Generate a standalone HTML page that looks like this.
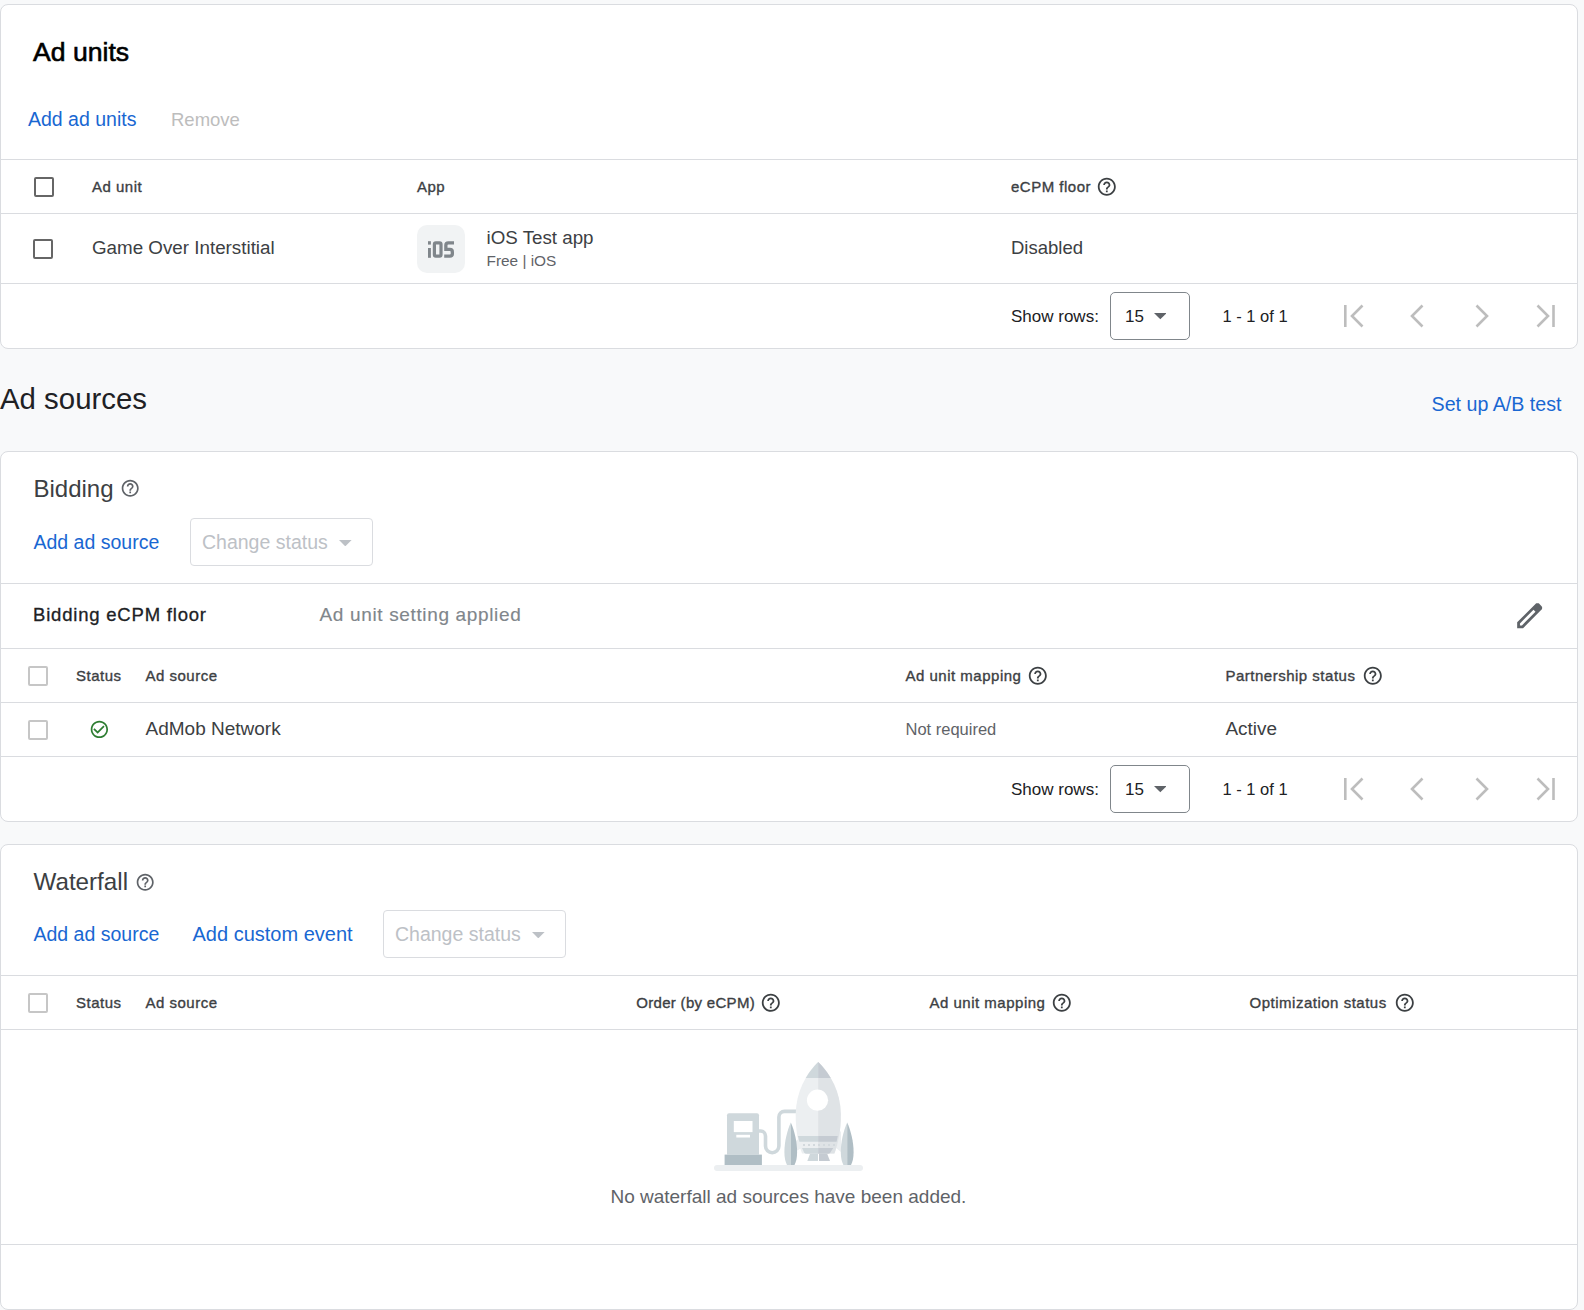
<!DOCTYPE html>
<html><head><meta charset="utf-8"><style>
html,body{margin:0;padding:0;}
body{width:1584px;height:1310px;overflow:hidden;background:#f8f9fa;position:relative;font-family:"Liberation Sans",sans-serif;}
.t{position:absolute;white-space:nowrap;}
</style></head><body>
<div style="position:absolute;left:0px;top:4px;width:1578px;height:345px;box-sizing:border-box;border:1px solid #dadce0;border-radius:8px;background:#fff;"></div>
<div class="t" style="top:37.49px;font-size:26.6px;line-height:30.59px;color:#000;-webkit-text-stroke:0.6px #000;left:33.00px;">Ad units</div>
<div class="t" style="top:108.03px;font-size:19.5px;line-height:22.42px;color:#1967d2;left:28.00px;">Add ad units</div>
<div class="t" style="top:108.95px;font-size:18.5px;line-height:21.27px;color:#bdbdbd;left:171.00px;">Remove</div>
<div style="position:absolute;left:1px;top:159px;width:1576px;height:1px;background:#dadce0;"></div>
<div style="position:absolute;left:34px;top:177px;width:20px;height:20px;box-sizing:border-box;border:2px solid #666;border-radius:2px;"></div>
<div class="t" style="top:178.08px;font-size:15px;line-height:17.25px;color:#3c4043;letter-spacing:0.5px;-webkit-text-stroke:0.35px #3c4043;left:92.00px;">Ad unit</div>
<div class="t" style="top:178.08px;font-size:15px;line-height:17.25px;color:#3c4043;letter-spacing:0.5px;-webkit-text-stroke:0.35px #3c4043;left:417.00px;">App</div>
<div class="t" style="top:178.08px;font-size:15px;line-height:17.25px;color:#3c4043;letter-spacing:0.5px;-webkit-text-stroke:0.35px #3c4043;left:1011.00px;">eCPM floor</div>
<svg style="position:absolute;left:1096.2px;top:175.6px" width="21.6" height="21.6" viewBox="0 0 24 24"><path fill="#3c4043" d="M11 18h2v-2h-2v2zm1-16C6.48 2 2 6.48 2 12s4.48 10 10 10 10-4.48 10-10S17.52 2 12 2zm0 18c-4.41 0-8-3.59-8-8s3.59-8 8-8 8 3.59 8 8-3.59 8-8 8zm0-14c-2.21 0-4 1.79-4 4h2c0-1.1.9-2 2-2s2 .9 2 2c0 2-3 1.75-3 5h2c0-2.25 3-2.5 3-5 0-2.21-1.79-4-4-4z"/></svg>
<div style="position:absolute;left:1px;top:213px;width:1576px;height:1px;background:#dadce0;"></div>
<div style="position:absolute;left:33px;top:239px;width:20px;height:20px;box-sizing:border-box;border:2px solid #666;border-radius:2px;"></div>
<div class="t" style="top:236.68px;font-size:18.8px;line-height:21.62px;color:#3c4043;left:92.00px;">Game Over Interstitial</div>
<div style="position:absolute;left:417px;top:225px;width:48px;height:48px;background:#f1f3f4;border-radius:10px;"></div>
<svg style="position:absolute;left:0px;top:0px" width="1584" height="300" viewBox="0 0 1584 300"><g fill="#80868b"><rect x="428" y="241.2" width="2.9" height="3.4"/><rect x="428" y="248" width="2.9" height="9.8"/><path fill-rule="evenodd" d="M435.8 241.2h3.8a3 3 0 0 1 3 3v10.6a3 3 0 0 1-3 3h-3.8a3 3 0 0 1-3-3v-10.6a3 3 0 0 1 3-3zM436 244.5v10h3.4v-10z"/></g><path fill="none" stroke="#80868b" stroke-width="3.3" d="M454 242.85H448.3Q445.85 242.85 445.85 245.3V249.45H449.9Q452.35 249.45 452.35 251.9V253.7Q452.35 256.15 449.9 256.15H444.2"/></svg>
<div class="t" style="top:226.72px;font-size:18.75px;line-height:21.56px;color:#3c4043;left:486.50px;">iOS Test app</div>
<div class="t" style="top:252.31px;font-size:15.4px;line-height:17.71px;color:#5f6368;left:486.50px;">Free | iOS</div>
<div class="t" style="top:236.95px;font-size:18.5px;line-height:21.27px;color:#3c4043;left:1011.00px;">Disabled</div>
<div style="position:absolute;left:1px;top:283px;width:1576px;height:1px;background:#dadce0;"></div>
<div class="t" style="top:306.53px;font-size:17px;line-height:19.55px;color:#202124;left:1011.00px;">Show rows:</div>
<div style="position:absolute;left:1110px;top:292px;width:80px;height:48px;box-sizing:border-box;border:1px solid #80868b;border-radius:5px;"></div>
<div class="t" style="top:306.53px;font-size:17px;line-height:19.55px;color:#202124;left:1125.00px;">15</div>
<svg style="position:absolute;left:1153.7px;top:313.2px" width="12.6" height="6.4" viewBox="0 0 12 6"><path fill="#5f6368" d="M0 0h12L6 6z"/></svg>
<div class="t" style="top:307.00px;font-size:16.5px;line-height:18.97px;color:#202124;left:1222.50px;">1 - 1 of 1</div>
<svg style="position:absolute;left:0;top:0" width="1584" height="1310"><g fill="none" stroke="#bdbdbd" stroke-width="2.6"><path d="M1345.3 305v22"/><path d="M1362.5 305.5l-10.5 10.5 10.5 10.5"/><path d="M1422.5 305.5l-10.5 10.5 10.5 10.5"/><path d="M1476.5 305.5l10.5 10.5-10.5 10.5"/><path d="M1537.5 305.5l10.5 10.5-10.5 10.5"/><path d="M1553.5 305v22"/></g></svg>
<div class="t" style="top:381.91px;font-size:29.4px;line-height:33.81px;color:#202124;left:0.00px;">Ad sources</div>
<div class="t" style="top:392.89px;font-size:19.65px;line-height:22.6px;color:#1967d2;right:22.50px;">Set up A/B test</div>
<div style="position:absolute;left:0px;top:451px;width:1578px;height:371px;box-sizing:border-box;border:1px solid #dadce0;border-radius:8px;background:#fff;"></div>
<div class="t" style="top:474.88px;font-size:24px;line-height:27.6px;color:#3c4043;left:33.50px;">Bidding</div>
<svg style="position:absolute;left:120.3px;top:478.2px" width="20.4" height="20.4" viewBox="0 0 24 24"><path fill="#5f6368" d="M11 18h2v-2h-2v2zm1-16C6.48 2 2 6.48 2 12s4.48 10 10 10 10-4.48 10-10S17.52 2 12 2zm0 18c-4.41 0-8-3.59-8-8s3.59-8 8-8 8 3.59 8 8-3.59 8-8 8zm0-14c-2.21 0-4 1.79-4 4h2c0-1.1.9-2 2-2s2 .9 2 2c0 2-3 1.75-3 5h2c0-2.25 3-2.5 3-5 0-2.21-1.79-4-4-4z"/></svg>
<div class="t" style="top:530.63px;font-size:19.5px;line-height:22.42px;color:#1967d2;left:33.50px;">Add ad source</div>
<div style="position:absolute;left:190px;top:518px;width:183px;height:48px;box-sizing:border-box;border:1px solid #dadce0;border-radius:4px;"></div>
<div class="t" style="top:531.03px;font-size:19.5px;line-height:22.42px;color:#bdc1c6;left:202.00px;">Change status</div>
<svg style="position:absolute;left:339.2px;top:539.5px" width="12.6" height="6.4" viewBox="0 0 12 6"><path fill="#bdc1c6" d="M0 0h12L6 6z"/></svg>
<div style="position:absolute;left:1px;top:583px;width:1576px;height:1px;background:#dadce0;"></div>
<div class="t" style="top:603.75px;font-size:18.5px;line-height:21.27px;color:#202124;letter-spacing:0.8px;-webkit-text-stroke:0.3px #202124;left:33.00px;">Bidding eCPM floor</div>
<div class="t" style="top:604.29px;font-size:19px;line-height:21.85px;color:#80868b;letter-spacing:0.65px;-webkit-text-stroke:0.15px #80868b;left:319.50px;">Ad unit setting applied</div>
<svg style="position:absolute;left:1512.8px;top:598.8px" width="33.33" height="33.33" viewBox="0 -960 960 960"><path fill="#5f6368" fill-rule="evenodd" d="M200-200h57l391-391-57-57-391 391v57Zm-80 80v-170l528-527q12-11 26.5-17t30.5-6q16 0 31 6t26 18l55 56q12 11 17.5 26t5.5 30q0 16-5.5 30.5T817-647L290-120H120Z"/></svg>
<div style="position:absolute;left:1px;top:648px;width:1576px;height:1px;background:#dadce0;"></div>
<div style="position:absolute;left:28px;top:666px;width:20px;height:20px;box-sizing:border-box;border:2px solid #c6c6c6;border-radius:2px;"></div>
<div class="t" style="top:667.38px;font-size:15px;line-height:17.25px;color:#3c4043;letter-spacing:0.5px;-webkit-text-stroke:0.35px #3c4043;left:76.00px;">Status</div>
<div class="t" style="top:667.38px;font-size:15px;line-height:17.25px;color:#3c4043;letter-spacing:0.5px;-webkit-text-stroke:0.35px #3c4043;left:145.50px;">Ad source</div>
<div class="t" style="top:667.38px;font-size:15px;line-height:17.25px;color:#3c4043;letter-spacing:0.5px;-webkit-text-stroke:0.35px #3c4043;left:905.50px;">Ad unit mapping</div>
<svg style="position:absolute;left:1027.2px;top:664.7px" width="21.6" height="21.6" viewBox="0 0 24 24"><path fill="#3c4043" d="M11 18h2v-2h-2v2zm1-16C6.48 2 2 6.48 2 12s4.48 10 10 10 10-4.48 10-10S17.52 2 12 2zm0 18c-4.41 0-8-3.59-8-8s3.59-8 8-8 8 3.59 8 8-3.59 8-8 8zm0-14c-2.21 0-4 1.79-4 4h2c0-1.1.9-2 2-2s2 .9 2 2c0 2-3 1.75-3 5h2c0-2.25 3-2.5 3-5 0-2.21-1.79-4-4-4z"/></svg>
<div class="t" style="top:667.38px;font-size:15px;line-height:17.25px;color:#3c4043;letter-spacing:0.5px;-webkit-text-stroke:0.35px #3c4043;left:1225.50px;">Partnership status</div>
<svg style="position:absolute;left:1362.2px;top:664.7px" width="21.6" height="21.6" viewBox="0 0 24 24"><path fill="#3c4043" d="M11 18h2v-2h-2v2zm1-16C6.48 2 2 6.48 2 12s4.48 10 10 10 10-4.48 10-10S17.52 2 12 2zm0 18c-4.41 0-8-3.59-8-8s3.59-8 8-8 8 3.59 8 8-3.59 8-8 8zm0-14c-2.21 0-4 1.79-4 4h2c0-1.1.9-2 2-2s2 .9 2 2c0 2-3 1.75-3 5h2c0-2.25 3-2.5 3-5 0-2.21-1.79-4-4-4z"/></svg>
<div style="position:absolute;left:1px;top:702px;width:1576px;height:1px;background:#dadce0;"></div>
<div style="position:absolute;left:28px;top:720px;width:20px;height:20px;box-sizing:border-box;border:2px solid #c6c6c6;border-radius:2px;"></div>
<svg style="position:absolute;left:89.02px;top:718.82px" width="20.76" height="20.76" viewBox="0 0 24 24"><path fill="#2e7d32" d="M16.59 7.58L10 14.17l-3.59-3.58L5 12l5 5 8-8zM12 2C6.48 2 2 6.48 2 12s4.48 10 10 10 10-4.48 10-10S17.52 2 12 2zm0 18c-4.42 0-8-3.58-8-8s3.58-8 8-8 8 3.58 8 8-3.58 8-8 8z"/></svg>
<div class="t" style="top:718.09px;font-size:19px;line-height:21.85px;color:#3c4043;left:145.50px;">AdMob Network</div>
<div class="t" style="top:720.30px;font-size:16.5px;line-height:18.97px;color:#5f6368;left:905.50px;">Not required</div>
<div class="t" style="top:717.59px;font-size:18.9px;line-height:21.73px;color:#3c4043;left:1225.50px;">Active</div>
<div style="position:absolute;left:1px;top:756px;width:1576px;height:1px;background:#dadce0;"></div>
<div class="t" style="top:779.53px;font-size:17px;line-height:19.55px;color:#202124;left:1011.00px;">Show rows:</div>
<div style="position:absolute;left:1110px;top:765px;width:80px;height:48px;box-sizing:border-box;border:1px solid #80868b;border-radius:5px;"></div>
<div class="t" style="top:779.53px;font-size:17px;line-height:19.55px;color:#202124;left:1125.00px;">15</div>
<svg style="position:absolute;left:1153.7px;top:786.2px" width="12.6" height="6.4" viewBox="0 0 12 6"><path fill="#5f6368" d="M0 0h12L6 6z"/></svg>
<div class="t" style="top:780.00px;font-size:16.5px;line-height:18.97px;color:#202124;left:1222.50px;">1 - 1 of 1</div>
<svg style="position:absolute;left:0;top:0" width="1584" height="1310"><g fill="none" stroke="#bdbdbd" stroke-width="2.6"><path d="M1345.3 778v22"/><path d="M1362.5 778.5l-10.5 10.5 10.5 10.5"/><path d="M1422.5 778.5l-10.5 10.5 10.5 10.5"/><path d="M1476.5 778.5l10.5 10.5-10.5 10.5"/><path d="M1537.5 778.5l10.5 10.5-10.5 10.5"/><path d="M1553.5 778v22"/></g></svg>
<div style="position:absolute;left:0px;top:844px;width:1578px;height:466px;box-sizing:border-box;border:1px solid #dadce0;border-radius:8px;background:#fff;"></div>
<div class="t" style="top:867.70px;font-size:24.2px;line-height:27.83px;color:#3c4043;left:33.50px;">Waterfall</div>
<svg style="position:absolute;left:135.3px;top:871.8px" width="20.4" height="20.4" viewBox="0 0 24 24"><path fill="#5f6368" d="M11 18h2v-2h-2v2zm1-16C6.48 2 2 6.48 2 12s4.48 10 10 10 10-4.48 10-10S17.52 2 12 2zm0 18c-4.41 0-8-3.59-8-8s3.59-8 8-8 8 3.59 8 8-3.59 8-8 8zm0-14c-2.21 0-4 1.79-4 4h2c0-1.1.9-2 2-2s2 .9 2 2c0 2-3 1.75-3 5h2c0-2.25 3-2.5 3-5 0-2.21-1.79-4-4-4z"/></svg>
<div class="t" style="top:923.33px;font-size:19.5px;line-height:22.42px;color:#1967d2;left:33.50px;">Add ad source</div>
<div class="t" style="top:922.87px;font-size:20px;line-height:23.0px;color:#1967d2;left:192.50px;">Add custom event</div>
<div style="position:absolute;left:383px;top:910px;width:183px;height:48px;box-sizing:border-box;border:1px solid #dadce0;border-radius:4px;"></div>
<div class="t" style="top:923.33px;font-size:19.5px;line-height:22.42px;color:#bdc1c6;left:395.00px;">Change status</div>
<svg style="position:absolute;left:532.2px;top:931.5px" width="12.6" height="6.4" viewBox="0 0 12 6"><path fill="#bdc1c6" d="M0 0h12L6 6z"/></svg>
<div style="position:absolute;left:1px;top:975px;width:1576px;height:1px;background:#dadce0;"></div>
<div style="position:absolute;left:28px;top:993px;width:20px;height:20px;box-sizing:border-box;border:2px solid #c6c6c6;border-radius:2px;"></div>
<div class="t" style="top:994.28px;font-size:15px;line-height:17.25px;color:#3c4043;letter-spacing:0.5px;-webkit-text-stroke:0.35px #3c4043;left:76.00px;">Status</div>
<div class="t" style="top:994.28px;font-size:15px;line-height:17.25px;color:#3c4043;letter-spacing:0.5px;-webkit-text-stroke:0.35px #3c4043;left:145.50px;">Ad source</div>
<div class="t" style="top:994.28px;font-size:15px;line-height:17.25px;color:#3c4043;letter-spacing:0.3px;-webkit-text-stroke:0.35px #3c4043;left:636.30px;">Order (by eCPM)</div>
<svg style="position:absolute;left:759.6px;top:991.5px" width="21.6" height="21.6" viewBox="0 0 24 24"><path fill="#3c4043" d="M11 18h2v-2h-2v2zm1-16C6.48 2 2 6.48 2 12s4.48 10 10 10 10-4.48 10-10S17.52 2 12 2zm0 18c-4.41 0-8-3.59-8-8s3.59-8 8-8 8 3.59 8 8-3.59 8-8 8zm0-14c-2.21 0-4 1.79-4 4h2c0-1.1.9-2 2-2s2 .9 2 2c0 2-3 1.75-3 5h2c0-2.25 3-2.5 3-5 0-2.21-1.79-4-4-4z"/></svg>
<div class="t" style="top:994.28px;font-size:15px;line-height:17.25px;color:#3c4043;letter-spacing:0.5px;-webkit-text-stroke:0.35px #3c4043;left:929.50px;">Ad unit mapping</div>
<svg style="position:absolute;left:1051.2px;top:991.5px" width="21.6" height="21.6" viewBox="0 0 24 24"><path fill="#3c4043" d="M11 18h2v-2h-2v2zm1-16C6.48 2 2 6.48 2 12s4.48 10 10 10 10-4.48 10-10S17.52 2 12 2zm0 18c-4.41 0-8-3.59-8-8s3.59-8 8-8 8 3.59 8 8-3.59 8-8 8zm0-14c-2.21 0-4 1.79-4 4h2c0-1.1.9-2 2-2s2 .9 2 2c0 2-3 1.75-3 5h2c0-2.25 3-2.5 3-5 0-2.21-1.79-4-4-4z"/></svg>
<div class="t" style="top:994.28px;font-size:15px;line-height:17.25px;color:#3c4043;letter-spacing:0.5px;-webkit-text-stroke:0.35px #3c4043;left:1249.60px;">Optimization status</div>
<svg style="position:absolute;left:1394.2px;top:991.5px" width="21.6" height="21.6" viewBox="0 0 24 24"><path fill="#3c4043" d="M11 18h2v-2h-2v2zm1-16C6.48 2 2 6.48 2 12s4.48 10 10 10 10-4.48 10-10S17.52 2 12 2zm0 18c-4.41 0-8-3.59-8-8s3.59-8 8-8 8 3.59 8 8-3.59 8-8 8zm0-14c-2.21 0-4 1.79-4 4h2c0-1.1.9-2 2-2s2 .9 2 2c0 2-3 1.75-3 5h2c0-2.25 3-2.5 3-5 0-2.21-1.79-4-4-4z"/></svg>
<div style="position:absolute;left:1px;top:1029px;width:1576px;height:1px;background:#dadce0;"></div>
<svg style="position:absolute;left:0;top:0" width="1584" height="1310">
<rect x="714" y="1165" width="149" height="6" rx="3" fill="#eceff1"/>
<path d="M727 1154.6V1115.3a2 2 0 0 1 2-2h28a2 2 0 0 1 2 2V1154.6z" fill="#cfd8dc"/>
<rect x="733.8" y="1121" width="18.7" height="11.1" fill="#fff"/>
<rect x="736.3" y="1134.8" width="13.7" height="2.7" fill="#fff"/>
<rect x="724.6" y="1154.6" width="37.3" height="10.4" fill="#b0bec5"/>
<path d="M759 1131h1.5a5 5 0 0 1 5 5v10a6.7 6.7 0 0 0 13.4 0v-29a5.6 5.6 0 0 1 5.6-5.6h12" fill="none" stroke="#cfd8dc" stroke-width="3.6"/>
<path d="M796 1141L802 1136V1148L796 1151z" fill="#eceff1"/><path d="M841 1131L836 1136V1148L841 1152z" fill="#eceff1"/>
<path d="M818.2 1062C806 1074 796 1092 795.7 1114C795.5 1130 798 1142 802 1153.6H834.4C838.5 1142 841 1130 840.8 1114C840.5 1092 830.5 1074 818.2 1062z" fill="#eceff1"/>
<path d="M818.2 1062C830.5 1074 840.5 1092 840.8 1114C841 1130 838.5 1142 834.4 1153.6H818.2z" fill="#dfe3e6"/>
<clipPath id="nc"><rect x="780" y="1050" width="80" height="28.1"/></clipPath><path clip-path="url(#nc)" d="M818.2 1062C806 1074 796 1092 795.7 1114H818.2z" fill="#cfd8dc"/>
<path clip-path="url(#nc)" d="M818.2 1062C830.5 1074 840.5 1092 840.8 1114H818.2z" fill="#c5cbd2"/>
<circle cx="817.5" cy="1100.2" r="10.6" fill="#fff"/>
<path d="M797.9 1135.9H818.2V1141.7H799.4z" fill="#cfd8dc"/>
<path d="M818.2 1135.9H837.8L836.6 1141.7H818.2z" fill="#c5cbd2"/>
<path d="M802 1148H818.2V1153.8H806.5Q805 1153.8 804 1152.3z" fill="#cfd8dc"/>
<path d="M818.2 1148H833.3L830.5 1152.3Q829.5 1153.8 828 1153.8H818.2z" fill="#c5cbd2"/>
<path d="M810 1153.8H818V1161H807.3z" fill="#cfd8dc"/>
<path d="M819 1153.8H827.2L830 1161H819z" fill="#c5cbd2"/>
<g fill="#d3d9dd"><rect x="803" y="1144" width="2" height="2"/><rect x="808" y="1144" width="2" height="2"/><rect x="813" y="1144" width="2" height="2"/><rect x="818" y="1144" width="2" height="2"/><rect x="823" y="1144" width="2" height="2"/><rect x="828" y="1144" width="2" height="2"/><rect x="833" y="1144" width="2" height="2"/></g>
<path d="M790.8 1122.4C787 1131 784.4 1142 784.4 1152C784.4 1158 785.5 1162 787 1165H790.8z" fill="#cfd8dc"/>
<path d="M790.8 1122.4C794.6 1131 797.1 1142 797.1 1152C797.1 1158 796 1162 794.5 1165H790.8z" fill="#b0bec5"/>
<path d="M847.2 1122.4C843.4 1131 840.8 1142 840.8 1152C840.8 1158 841.9 1162 843.4 1165H847.2z" fill="#cfd8dc"/>
<path d="M847.2 1122.4C851 1131 853.6 1142 853.6 1152C853.6 1158 852.5 1162 851 1165H847.2z" fill="#b0bec5"/>
</svg>
<div class="t" style="top:1186.09px;font-size:19px;line-height:21.85px;color:#5f6368;left:388.40px;width:800px;text-align:center;">No waterfall ad sources have been added.</div>
<div style="position:absolute;left:1px;top:1244px;width:1576px;height:1px;background:#dadce0;"></div>
</body></html>
